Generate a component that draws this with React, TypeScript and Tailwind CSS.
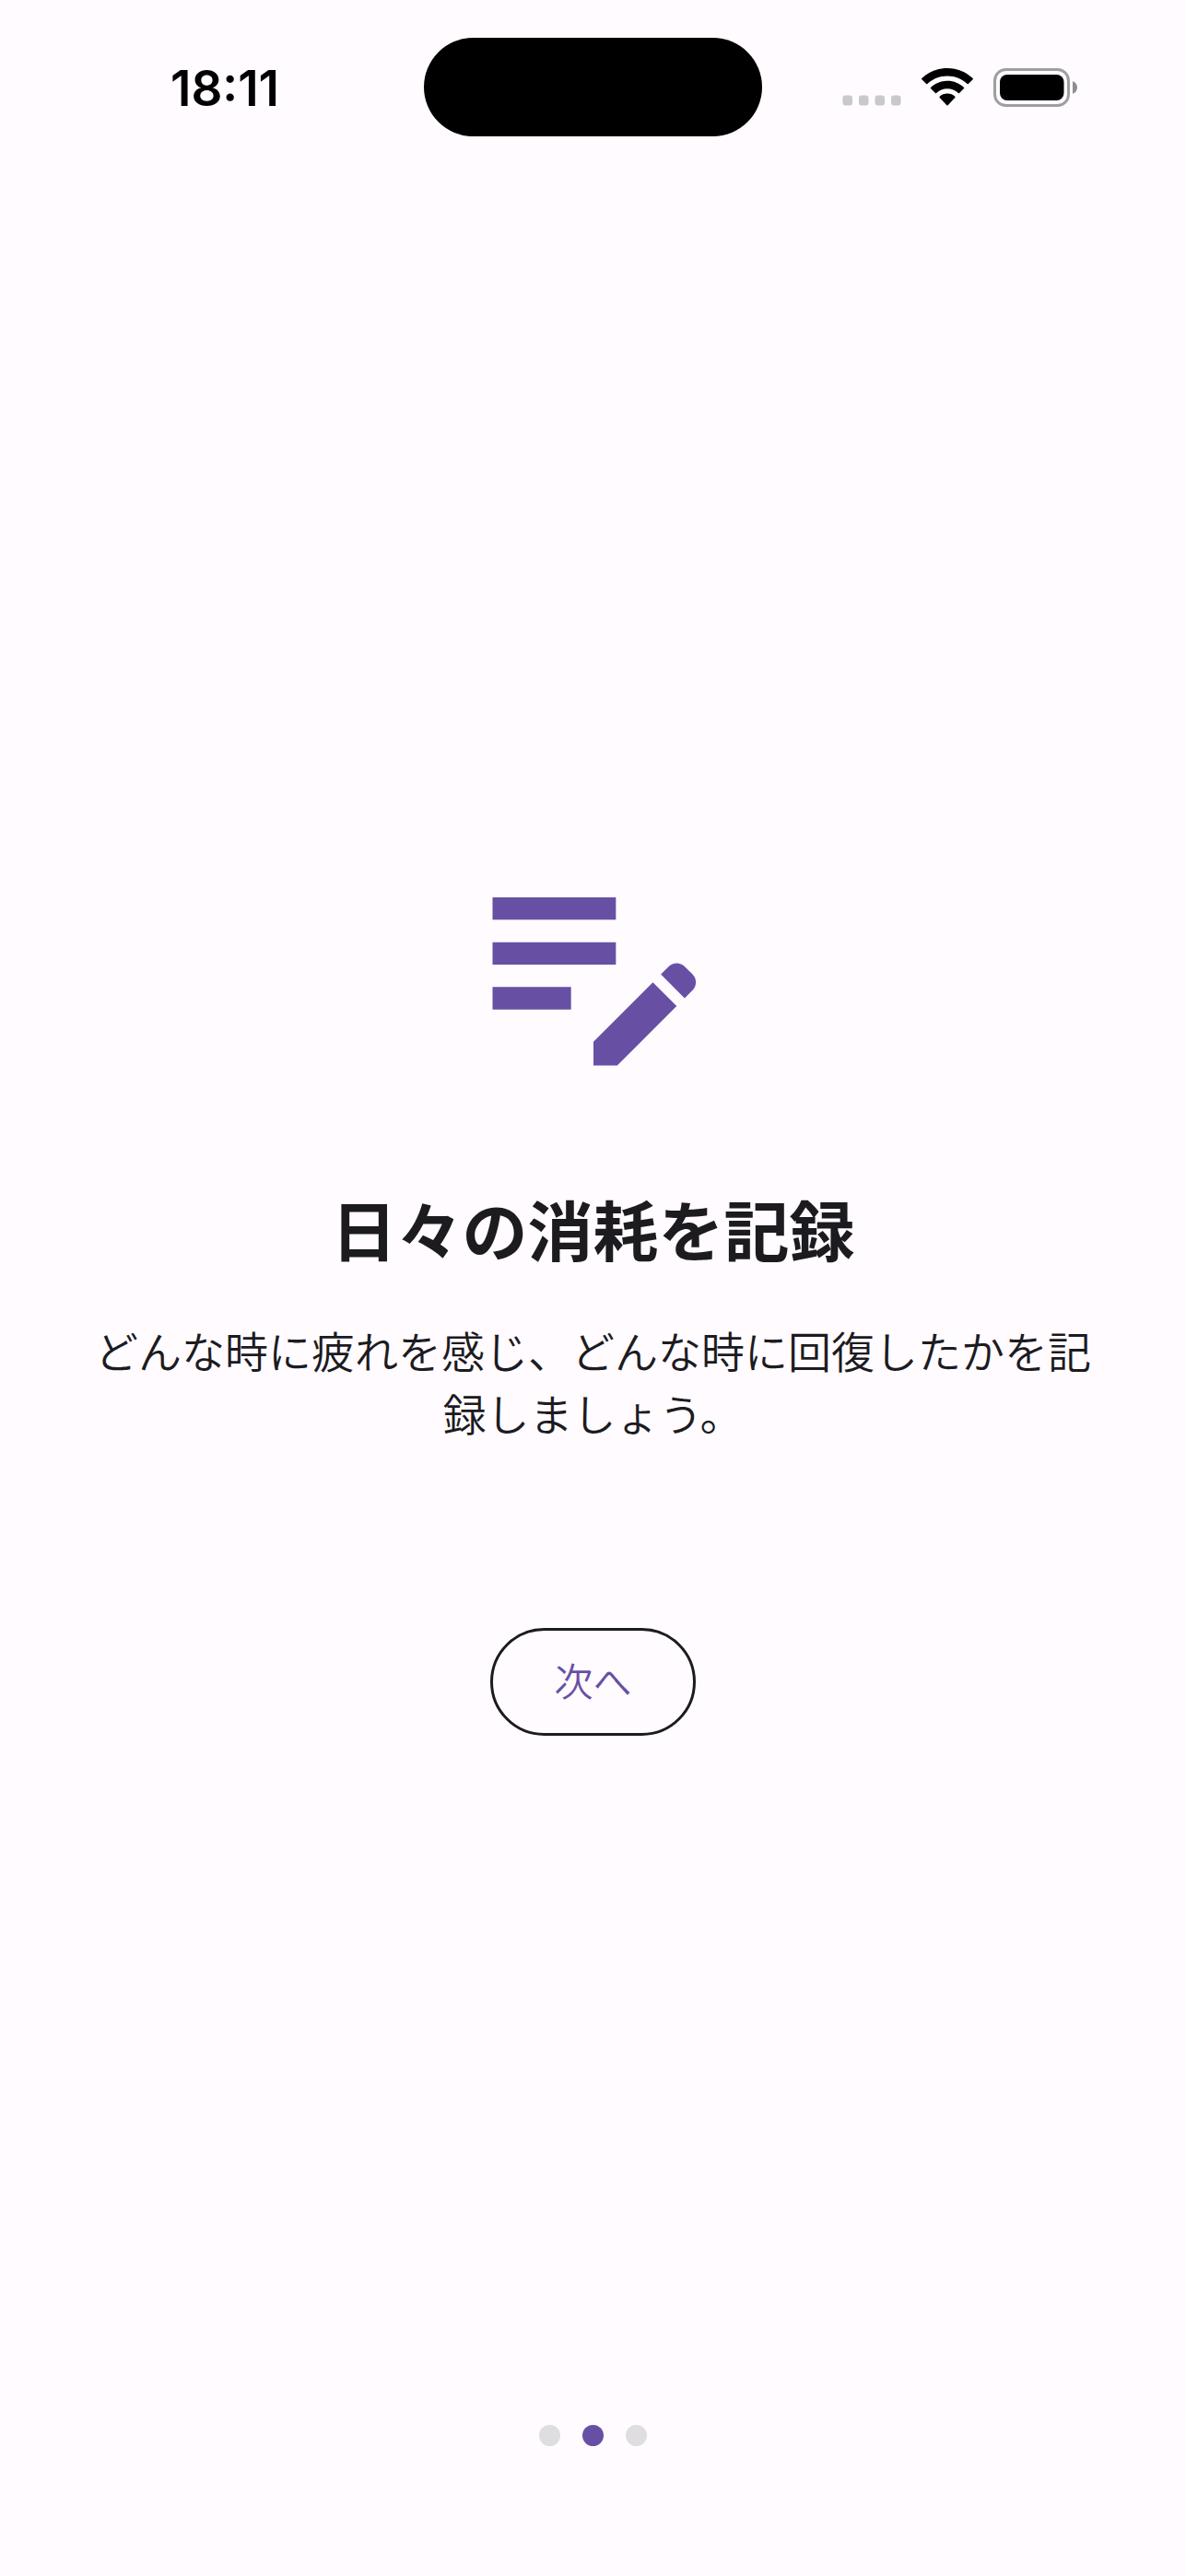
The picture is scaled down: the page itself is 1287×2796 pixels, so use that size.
import { MdEditNote } from "react-icons/md";
import clsx from "clsx";

const steps = ["はじめに", "記録", "開始"];
const currentStep = 1;

const SignalDots = () => (
  <svg viewBox="0 0 64 42" className="w-16 h-[42px]" fill="#c9c8ca" aria-hidden="true">
    <rect x="0.5" y="29.5" width="10.5" height="11" rx="3" />
    <rect x="18" y="29.5" width="10.5" height="11" rx="3" />
    <rect x="35.5" y="29.5" width="10.5" height="11" rx="3" />
    <rect x="53" y="29.5" width="10.5" height="11" rx="3" />
  </svg>
);

const WifiIcon = () => (
  <svg viewBox="0 0 56 42" className="w-14 h-[42px]" aria-hidden="true">
    <path d="M28 0C17.2 0 7.400 4.200 0.300 11.100a0.800 0.800 0 0 0 0 1.100L5.200 17.100a0.800 0.800 0 0 0 1.100 0C12 11.700 19.600 8.400 28 8.400S44 11.700 49.700 17.100a0.800 0.800 0 0 0 1.100 0L55.700 12.200a0.800 0.800 0 0 0 0-1.100C48.600 4.200 38.800 0 28 0Z" />
    <path d="M28 13.800c-7 0-13.300 2.700-18 7.100a0.800 0.800 0 0 0 0 1.100l5 5a0.800 0.800 0 0 0 1.100 0c3.100-2.900 7.300-4.700 11.900-4.700s8.800 1.800 11.900 4.700a0.800 0.800 0 0 0 1.100 0l5-5a0.800 0.800 0 0 0 0-1.100c-4.700-4.400-11-7.100-18-7.100Z" />
    <path d="M28 27.500c-3.200 0-6.100 1.200-8.300 3.200a0.800 0.800 0 0 0 0 1.200l7.700 8.300a0.800 0.800 0 0 0 1.200 0l7.700-8.300a0.800 0.800 0 0 0 0-1.200C34.100 28.700 31.200 27.500 28 27.500Z" />
  </svg>
);

const BatteryIcon = () => (
  <svg viewBox="0 0 91 42" className="w-[91px] h-[42px]" aria-hidden="true">
    <rect x="1.500" y="1.500" width="80" height="39" rx="12" fill="none" stroke="#a09ea1" strokeWidth="3" />
    <rect x="7" y="7" width="69.500" height="28" rx="8" />
    <path d="M86 14c3 1.200 5 3.900 5 7s-2 5.800-5 7Z" fill="#8f8d90" />
  </svg>
);

const StatusBar = () => (
  <header className="grid grid-cols-[1fr_367px_1fr] items-center py-[41px]">
    <time className="pt-1 pl-7 text-center font-['Inter',sans-serif] text-[53px] leading-none font-semibold text-black">
      18:11
    </time>
    <div className="h-[107px] rounded-full bg-black" />
    <div className="flex items-center justify-center gap-[22px] pr-8">
      <SignalDots />
      <WifiIcon />
      <BatteryIcon />
    </div>
  </header>
);

const App = () => (
  <div
    lang="ja"
    className="flex min-h-screen flex-col bg-[#fffbff] font-['Noto_Sans_CJK_JP',sans-serif] text-[#1c1b1f]"
  >
    <StatusBar />

    <main className="flex flex-1 flex-col items-center justify-center px-24 text-center">
      <MdEditNote className="size-[292px] text-[#6750a4]" aria-hidden="true" />
      <h1 className="mt-[90px] text-[71px] leading-[98px] font-bold">日々の消耗を記録</h1>
      <p className="mt-[50px] text-[47px] leading-[68px] font-[350]">
        どんな時に疲れを感じ、どんな時に回復したかを記録しましょう。
      </p>
      <button
        type="button"
        className="mt-[200px] h-[117px] rounded-full border-3 border-[#1c1b1f] px-[66px] pb-1 text-[42px] leading-none font-[350] text-[#6750a4]"
      >
        次へ
      </button>
    </main>

    <footer className="flex justify-center gap-6 pt-[37px] pb-[141px]">
      {steps.map((step, index) => (
        <span
          key={step}
          className={clsx(
            "size-[23px] rounded-full",
            index === currentStep ? "bg-[#6750a4]" : "bg-[#dedddf]"
          )}
        />
      ))}
    </footer>
  </div>
);

export default App;
